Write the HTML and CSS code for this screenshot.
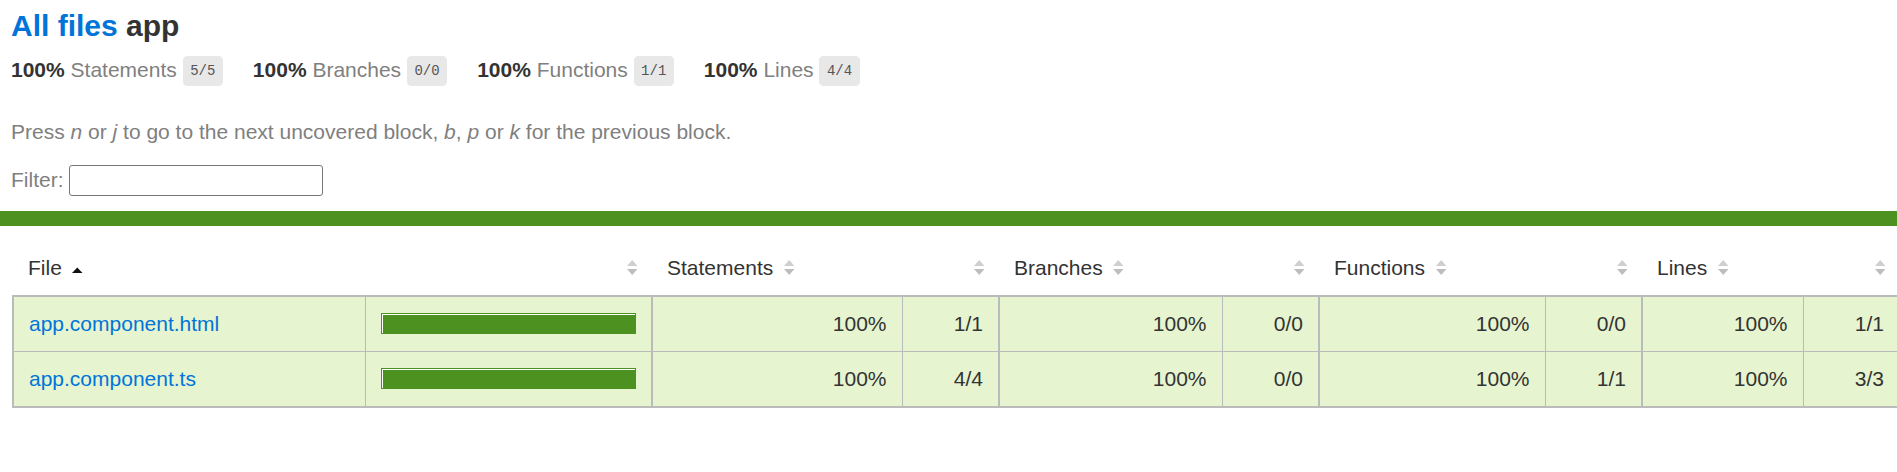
FILE: index.html
```html
<!DOCTYPE html>
<html lang="en">
<head>
<meta charset="utf-8">
<title>Code coverage report for app</title>
<link rel="stylesheet" href="styles.css">
</head>
<body>
<div class="wrapper">
  <div class="header">
    <h1><a href="#">All files</a> app</h1>
    <div class="summary">
      <div class="stat">
        <span class="strong">100% </span>
        <span class="quiet">Statements</span>
        <span class="fraction">5/5</span>
      </div>
      <div class="stat">
        <span class="strong">100% </span>
        <span class="quiet">Branches</span>
        <span class="fraction">0/0</span>
      </div>
      <div class="stat">
        <span class="strong">100% </span>
        <span class="quiet">Functions</span>
        <span class="fraction">1/1</span>
      </div>
      <div class="stat">
        <span class="strong">100% </span>
        <span class="quiet">Lines</span>
        <span class="fraction">4/4</span>
      </div>
    </div>
    <p class="quiet hint">Press <em>n</em> or <em>j</em> to go to the next uncovered block, <em>b</em>, <em>p</em> or <em>k</em> for the previous block.</p>
    <div class="quiet filter">Filter: <input type="text" class="file-search" aria-label="Filter"></div>
  </div>
  <div class="status-line high-line"></div>
  <div class="table-wrap">
    <table class="coverage-summary">
      <colgroup>
        <col class="c-file"><col class="c-pic">
        <col class="c-spct"><col class="c-abs">
        <col class="c-bpct"><col class="c-abs">
        <col class="c-fpct"><col class="c-abs">
        <col class="c-lpct"><col class="c-abs">
      </colgroup>
      <thead>
        <tr>
          <th class="file">File<span class="sorter"><svg viewBox="0 0 7 10" width="10.5" height="15"><polygon points="0,8.7 3.5,5 7,8.7" fill="#111"/></svg></span></th>
          <th class="pic"><span class="sorter"><svg viewBox="0 0 7 10" width="10.5" height="15"><polygon points="0,4 3.5,0 7,4" fill="#cfcfcf"/><polygon points="0,6 7,6 3.5,10" fill="#bdbdbd"/></svg></span></th>
          <th class="pct">Statements<span class="sorter"><svg viewBox="0 0 7 10" width="10.5" height="15"><polygon points="0,4 3.5,0 7,4" fill="#cfcfcf"/><polygon points="0,6 7,6 3.5,10" fill="#bdbdbd"/></svg></span></th>
          <th class="abs"><span class="sorter"><svg viewBox="0 0 7 10" width="10.5" height="15"><polygon points="0,4 3.5,0 7,4" fill="#cfcfcf"/><polygon points="0,6 7,6 3.5,10" fill="#bdbdbd"/></svg></span></th>
          <th class="pct">Branches<span class="sorter"><svg viewBox="0 0 7 10" width="10.5" height="15"><polygon points="0,4 3.5,0 7,4" fill="#cfcfcf"/><polygon points="0,6 7,6 3.5,10" fill="#bdbdbd"/></svg></span></th>
          <th class="abs"><span class="sorter"><svg viewBox="0 0 7 10" width="10.5" height="15"><polygon points="0,4 3.5,0 7,4" fill="#cfcfcf"/><polygon points="0,6 7,6 3.5,10" fill="#bdbdbd"/></svg></span></th>
          <th class="pct">Functions<span class="sorter"><svg viewBox="0 0 7 10" width="10.5" height="15"><polygon points="0,4 3.5,0 7,4" fill="#cfcfcf"/><polygon points="0,6 7,6 3.5,10" fill="#bdbdbd"/></svg></span></th>
          <th class="abs"><span class="sorter"><svg viewBox="0 0 7 10" width="10.5" height="15"><polygon points="0,4 3.5,0 7,4" fill="#cfcfcf"/><polygon points="0,6 7,6 3.5,10" fill="#bdbdbd"/></svg></span></th>
          <th class="pct">Lines<span class="sorter"><svg viewBox="0 0 7 10" width="10.5" height="15"><polygon points="0,4 3.5,0 7,4" fill="#cfcfcf"/><polygon points="0,6 7,6 3.5,10" fill="#bdbdbd"/></svg></span></th>
          <th class="abs"><span class="sorter"><svg viewBox="0 0 7 10" width="10.5" height="15"><polygon points="0,4 3.5,0 7,4" fill="#cfcfcf"/><polygon points="0,6 7,6 3.5,10" fill="#bdbdbd"/></svg></span></th>
        </tr>
      </thead>
      <tbody>
        <tr>
          <td class="file high"><a href="#">app.component.html</a></td>
          <td class="pic high"><div class="chart"><div class="cover-fill" style="width: 100%"></div></div></td>
          <td class="pct high">100%</td>
          <td class="abs high">1/1</td>
          <td class="pct high">100%</td>
          <td class="abs high">0/0</td>
          <td class="pct high">100%</td>
          <td class="abs high">0/0</td>
          <td class="pct high">100%</td>
          <td class="abs high">1/1</td>
        </tr>
        <tr>
          <td class="file high"><a href="#">app.component.ts</a></td>
          <td class="pic high"><div class="chart"><div class="cover-fill" style="width: 100%"></div></div></td>
          <td class="pct high">100%</td>
          <td class="abs high">4/4</td>
          <td class="pct high">100%</td>
          <td class="abs high">0/0</td>
          <td class="pct high">100%</td>
          <td class="abs high">1/1</td>
          <td class="pct high">100%</td>
          <td class="abs high">3/3</td>
        </tr>
      </tbody>
    </table>
  </div>
</div>
</body>
</html>
```

FILE: styles.css
```css
*, *::before, *::after {
  box-sizing: border-box;
}

html, body {
  margin: 0;
  padding: 0;
  overflow-x: hidden;
}

body {
  font-family: "Liberation Sans", Arial, Helvetica, sans-serif;
  font-size: 21px;
  color: #333;
  background: #fff;
}

a {
  color: #0074D9;
  text-decoration: none;
}

.header {
  padding: 9px 15px 15px 11px;
}

h1 {
  font-size: 30px;
  font-weight: bold;
  margin: 0;
}

.summary {
  display: flex;
}

.stat {
  padding: 15px 30px 15px 0;
}

.strong {
  font-weight: bold;
}

.quiet {
  color: #7f7f7f;
}

.fraction {
  font-family: "Liberation Mono", "DejaVu Sans Mono", monospace;
  font-size: 14px;
  color: #555;
  background: #e8e8e8;
  padding: 7px 7.5px;
  border-radius: 4.5px;
  vertical-align: middle;
}

.hint {
  margin: 22.5px 0 21px;
}

.file-search {
  width: 254px;
  height: 31px;
  border: 1px solid #767676;
  border-radius: 3px;
  padding: 1px 3px;
  font-family: "Liberation Sans", Arial, sans-serif;
  font-size: 20px;
  background: #fff;
  outline: none;
}

.status-line {
  height: 15px;
}

.high-line {
  background: rgb(77, 146, 33);
}

.table-wrap {
  padding: 15px 0 15px 12px;
}

.coverage-summary {
  border-collapse: collapse;
  table-layout: fixed;
  width: 1888px;
}

.c-file { width: 352px; }
.c-pic { width: 287px; }
.c-spct { width: 250px; }
.c-bpct { width: 223px; }
.c-fpct { width: 226px; }
.c-lpct { width: 161px; }
.c-abs { width: 97px; }

.coverage-summary th,
.coverage-summary td {
  padding: 15px;
}

.coverage-summary th {
  text-align: left;
  font-weight: normal;
  white-space: nowrap;
}

.coverage-summary th.pic,
.coverage-summary th.abs,
.coverage-summary td.pct,
.coverage-summary td.abs {
  text-align: right;
}

.coverage-summary tbody {
  border: 2px solid #bbb;
}

.coverage-summary tbody tr {
  border-bottom: 1px solid #bbb;
}

.coverage-summary td {
  border-right: 1px solid #bbb;
  white-space: nowrap;
  height: 55px;
}

.coverage-summary td.pic,
.coverage-summary td.abs {
  border-right-width: 2px;
}

.coverage-summary td:last-child {
  border-right: none;
}

.high {
  background: rgb(230, 245, 208);
}

.sorter {
  display: inline-block;
  width: 10.5px;
  height: 15px;
  margin-left: 10.5px;
}

.sorter svg {
  display: block;
}

.chart {
  line-height: 0;
  border: 1px solid rgb(77, 146, 33);
  background: #fff;
  padding: 1px 0 0 1px;
}

.cover-fill {
  display: block;
  height: 18px;
  background: rgb(77, 146, 33);
}
```
